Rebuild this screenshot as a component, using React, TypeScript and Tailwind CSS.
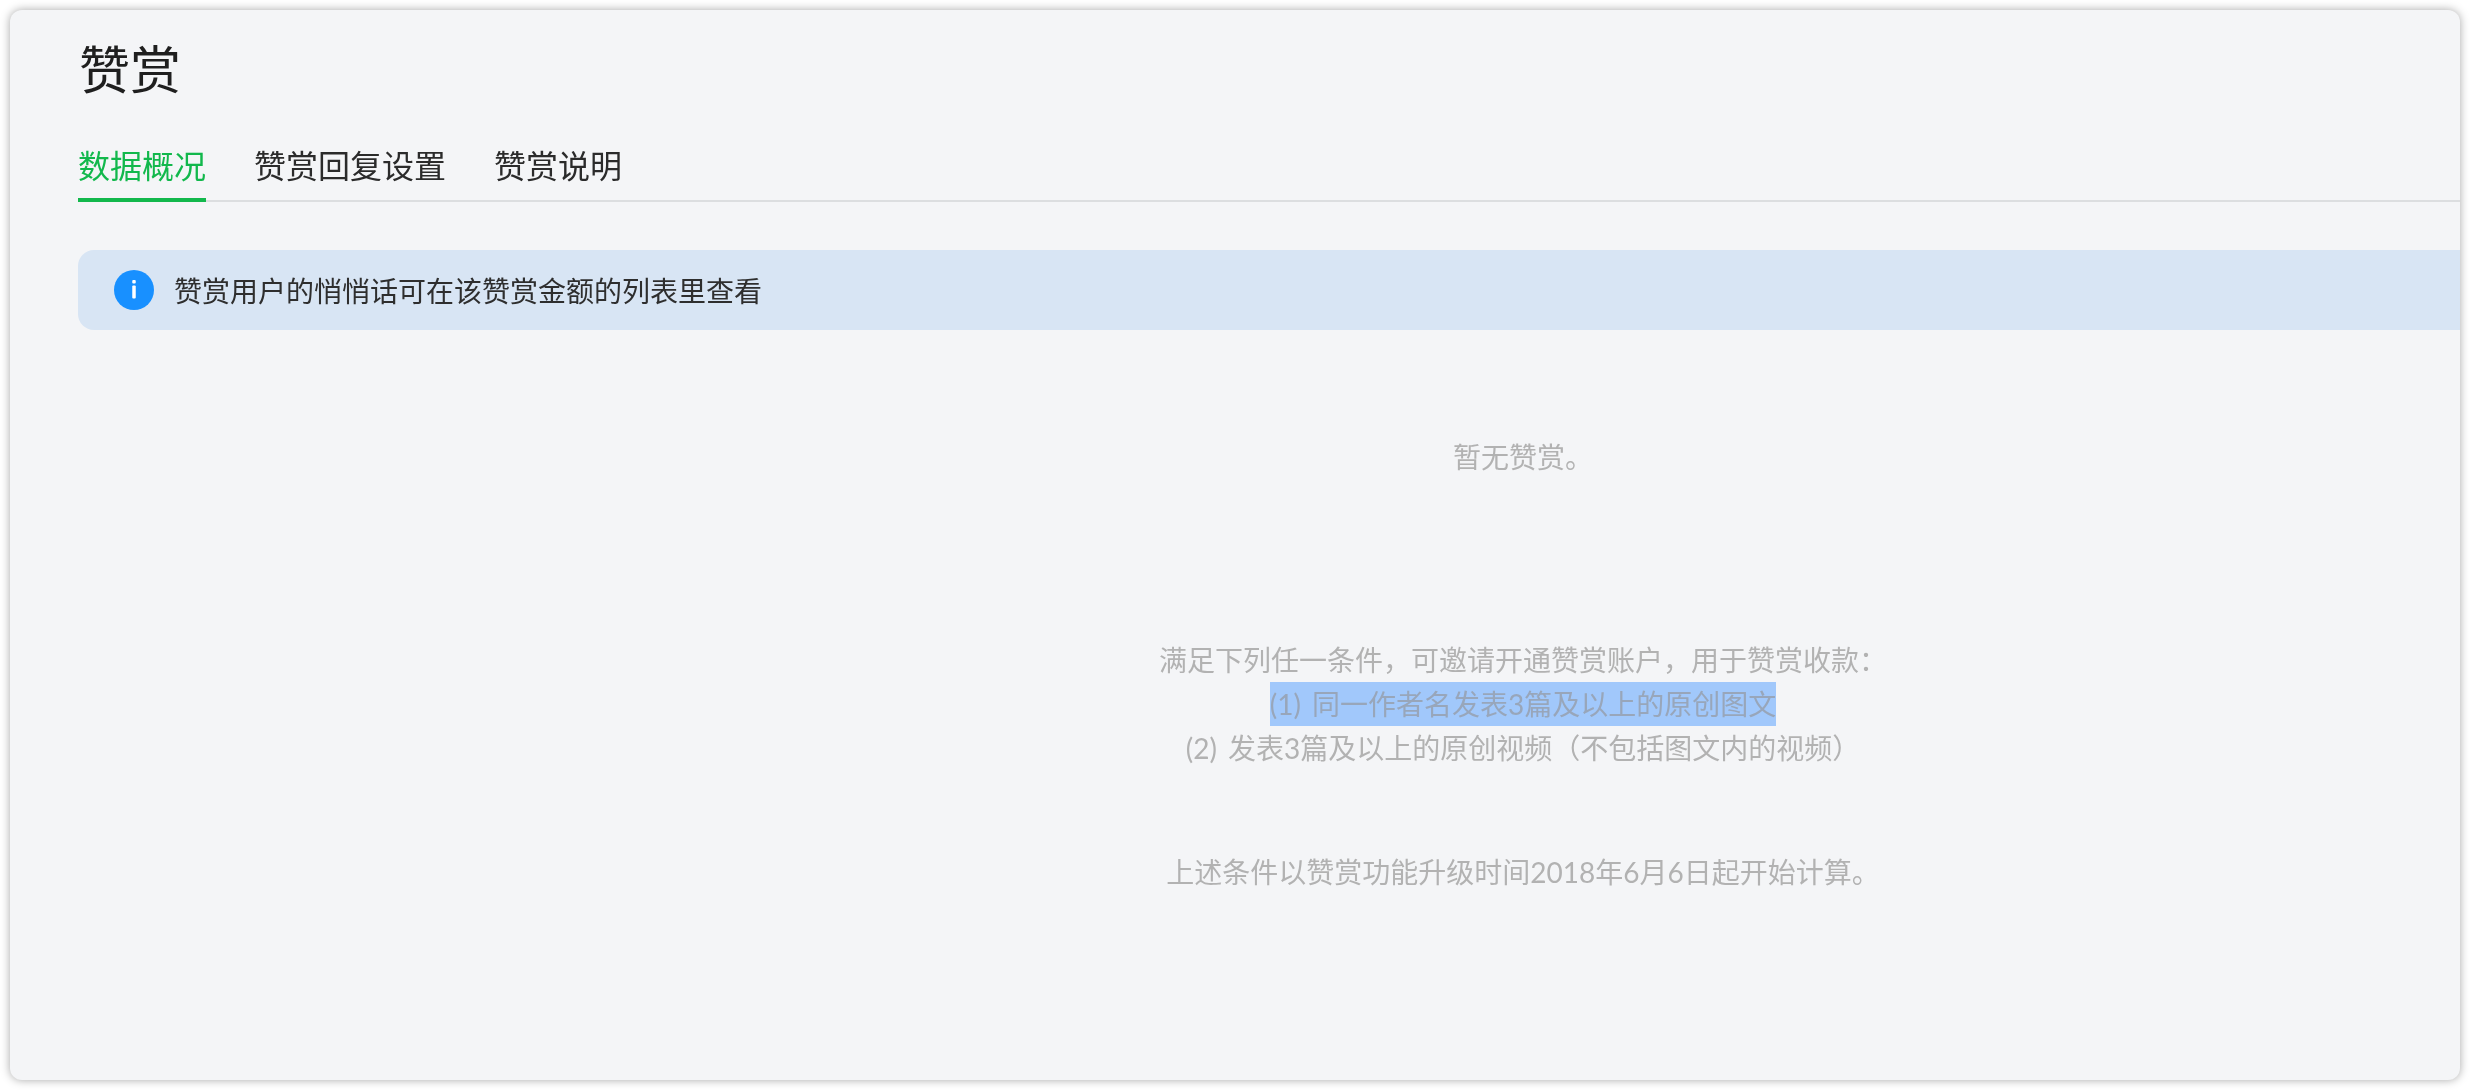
import React from 'react';

const tabs = [
  { label: '数据概况', active: true },
  { label: '赞赏回复设置' },
  { label: '赞赏说明' },
];

const App = () => {
  return (
    <div className="h-screen w-full bg-white p-[10px] font-['Lato','Noto_Sans_CJK_SC',sans-serif]">
      <div className="h-full overflow-hidden rounded-[12px] bg-[#f4f5f7] pt-[30px] pl-[68px] shadow-[0_0_10px_rgba(0,0,0,0.35)] blur-[0.5px]">
        <h1 className="h-[60px] pl-[1px] text-[51px] leading-[60px] font-normal text-[#1f1f1f]">赞赏</h1>

        {/* Tabs */}
        <nav className="mt-[45px] flex h-[57px] gap-[48px] border-b-2 border-[#dcdee0] text-[32px] leading-[41px] text-[#2b2b2b]">
          {tabs.map((tab) => (
            <div
              key={tab.label}
              className={tab.active ? 'h-[57px] border-b-4 border-[#12b84c] text-[#12b84c]' : 'h-[57px]'}
            >
              {tab.label}
            </div>
          ))}
        </nav>

        {/* Notice */}
        <div className="mt-[48px] flex h-[80px] items-center gap-[20px] rounded-l-[16px] bg-[#d8e5f4] pl-[36px] text-[28px] text-[#2e2e2e]">
          <svg width="40" height="40" viewBox="0 0 40 40">
            <circle cx="20" cy="20" r="20" fill="#1890ff" />
            <rect x="18.25" y="10" width="3.5" height="3.5" rx="1" fill="#fff" />
            <rect x="18.25" y="15.5" width="3.5" height="13" rx="1" fill="#fff" />
          </svg>
          <span className="pt-[2px]">赞赏用户的悄悄话可在该赞赏金额的列表里查看</span>
        </div>

        {/* Empty state */}
        <div className="pl-[508px] text-center text-[28px] leading-[44px] text-[#b2b2b2] [word-spacing:4px]">
          <p className="mt-[105px]">暂无赞赏。</p>
          <div className="mt-[159px]">
            <p>满足下列任一条件，可邀请开通赞赏账户，用于赞赏收款：</p>
            <p>
              <span className="inline-block bg-[#a1c8fb] text-[#98a6ba]">(1) 同一作者名发表3篇及以上的原创图文</span>
            </p>
            <p>(2) 发表3篇及以上的原创视频（不包括图文内的视频）</p>
          </div>
          <p className="mt-[80px]">上述条件以赞赏功能升级时间2018年6月6日起开始计算。</p>
        </div>
      </div>
    </div>
  );
};

export default App;
